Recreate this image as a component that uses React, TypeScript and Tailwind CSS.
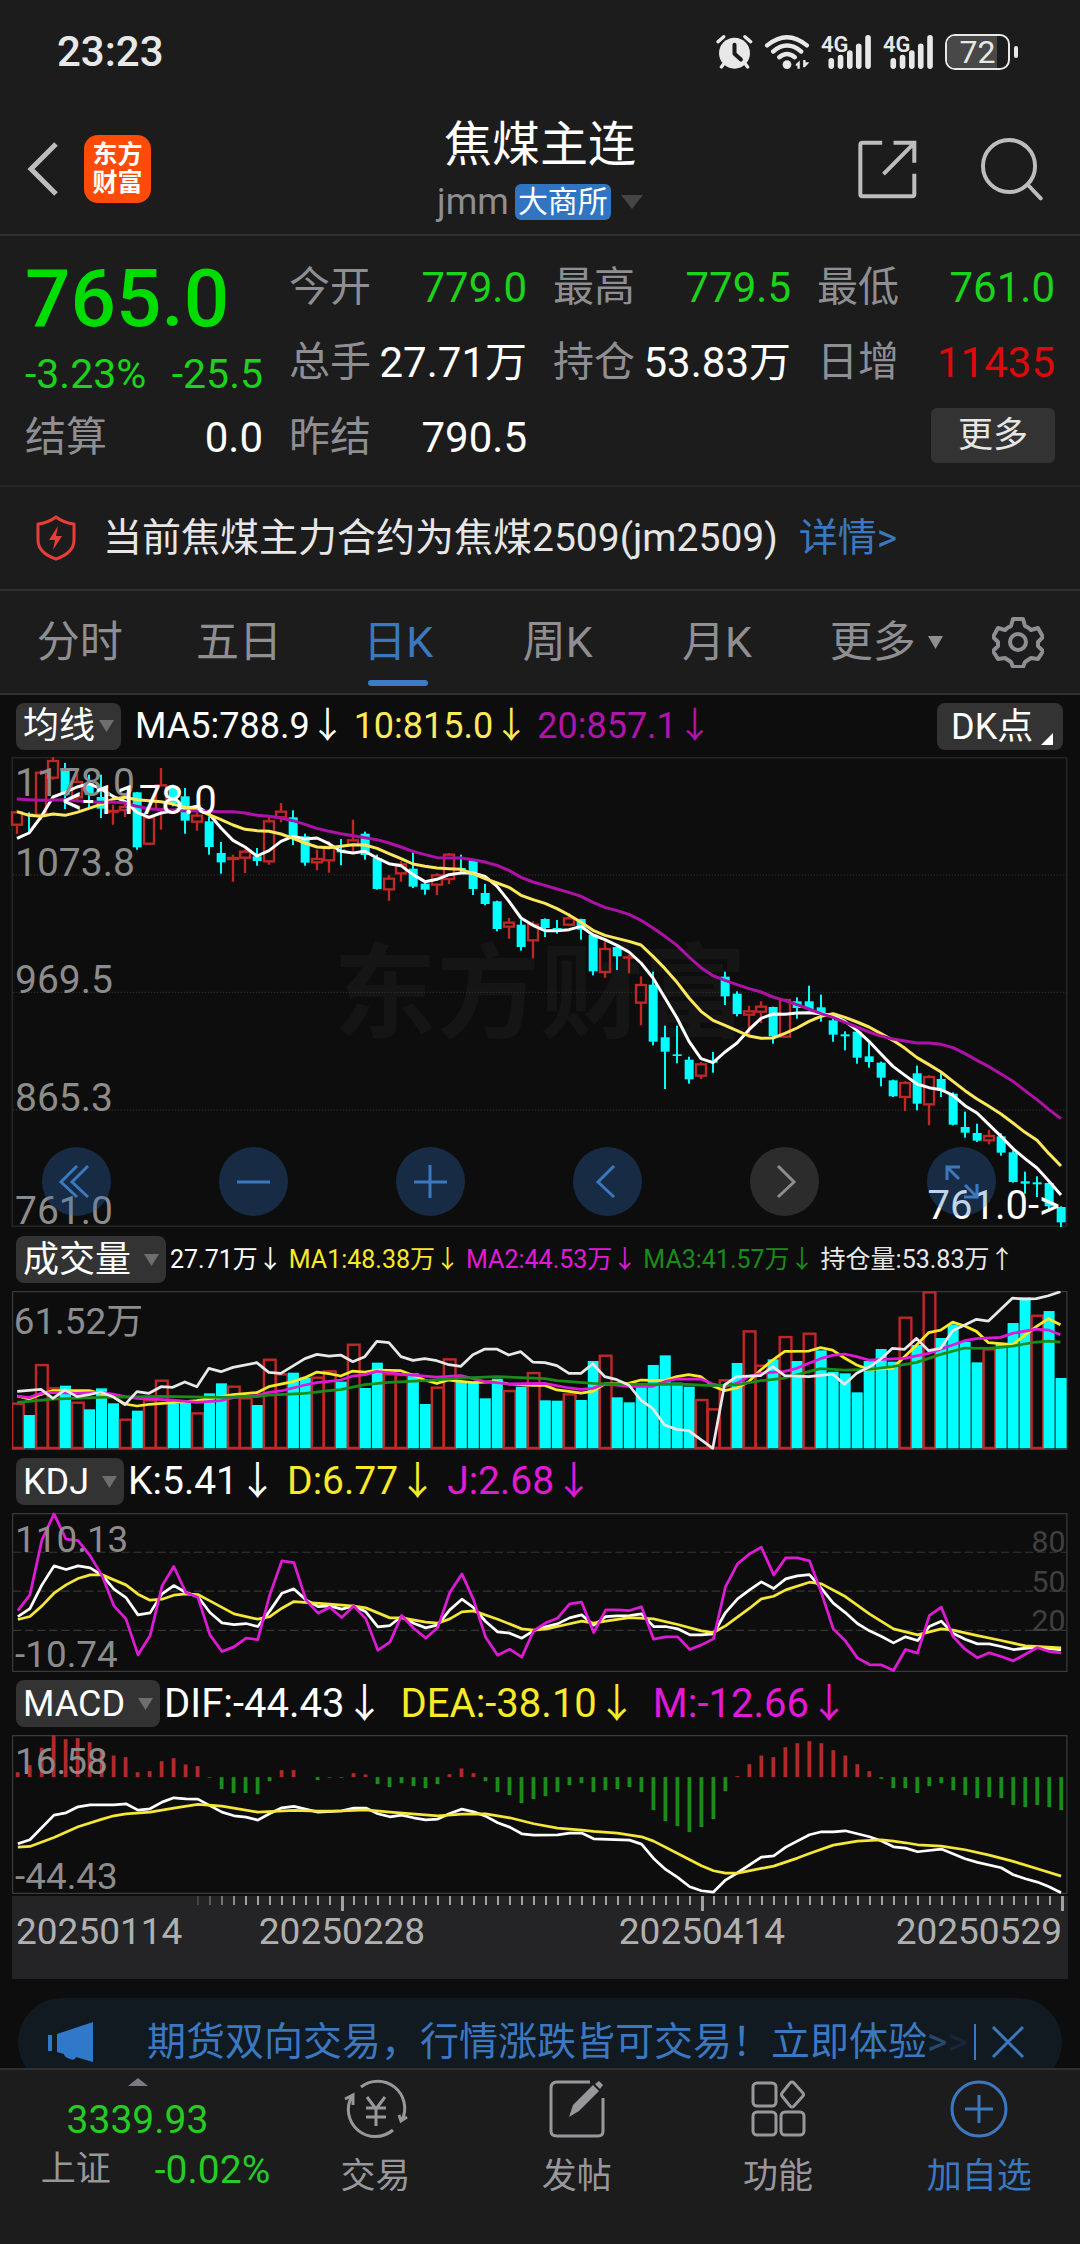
import React from "react";

/* ---------- Series data (chart units: main panel 36 per bar, sub panels 34.85 per bar) ---------- */

// [direction, high, bodyTop, bodyBottom, low]
type Candle = ["u" | "d", number, number, number, number];
const candles: Candle[] = [
  ["u", 212, 216, 257, 282], ["d", 218, 222, 226, 280], ["u", 92, 97, 227, 240], ["u", 53, 62, 116, 120],
  ["d", 70, 88, 165, 208], ["u", 100, 125, 175, 182], ["d", 105, 130, 165, 205], ["d", 105, 172, 207, 235],
  ["u", 195, 212, 218, 255], ["u", 190, 200, 213, 232], ["d", 157, 158, 323, 330], ["u", 228, 232, 314, 316],
  ["u", 85, 135, 210, 270], ["d", 135, 145, 190, 200], ["d", 145, 170, 243, 282], ["u", 218, 226, 248, 273],
  ["d", 230, 245, 322, 345], ["d", 307, 340, 368, 402], ["u", 345, 353, 360, 426], ["u", 330, 334, 356, 400],
  ["d", 325, 350, 364, 378], ["u", 230, 243, 367, 375], ["u", 190, 214, 235, 248], ["d", 212, 233, 292, 316],
  ["d", 282, 290, 369, 378], ["u", 330, 356, 370, 392], ["u", 305, 320, 364, 399], ["d", 298, 330, 338, 377],
  ["u", 240, 300, 318, 335], ["d", 276, 282, 346, 360], ["d", 345, 355, 448, 450], ["u", 406, 415, 451, 483],
  ["u", 365, 372, 403, 426], ["d", 338, 387, 441, 445], ["d", 428, 432, 450, 465], ["u", 400, 405, 437, 466],
  ["u", 340, 343, 420, 433], ["d", 345, 385, 391, 397], ["d", 360, 362, 448, 466], ["d", 433, 460, 493, 497],
  ["d", 483, 485, 568, 575], ["u", 535, 547, 563, 597], ["d", 540, 555, 622, 633], ["u", 545, 553, 604, 656],
  ["d", 536, 538, 565, 592], ["d", 541, 565, 570, 582], ["u", 520, 534, 557, 560], ["d", 537, 538, 570, 600],
  ["d", 584, 585, 695, 707], ["u", 605, 626, 699, 714], ["d", 615, 622, 650, 691], ["u", 645, 651, 656, 701],
  ["u", 710, 734, 791, 857], ["d", 696, 735, 906, 917], ["d", 858, 893, 936, 1048], ["d", 858, 944, 949, 971],
  ["d", 951, 960, 1019, 1032], ["u", 967, 972, 1010, 1018], ["d", 937, 963, 969, 999], ["d", 696, 711, 770, 796],
  ["d", 755, 762, 823, 830], ["u", 798, 813, 827, 890], ["u", 785, 799, 818, 850], ["d", 801, 802, 890, 912],
  ["u", 777, 779, 893, 895], ["d", 773, 785, 805, 837], ["d", 738, 785, 808, 812], ["d", 765, 803, 825, 846],
  ["d", 835, 842, 885, 906], ["d", 875, 884, 890, 932], ["d", 872, 876, 954, 972], ["d", 902, 950, 967, 984],
  ["d", 966, 969, 1014, 1040], ["d", 1020, 1022, 1070, 1072], ["u", 1025, 1028, 1074, 1114], ["d", 978, 1001, 1092, 1112],
  ["u", 1007, 1010, 1096, 1157], ["d", 997, 1018, 1052, 1072], ["d", 1058, 1062, 1155, 1157], ["d", 1116, 1162, 1179, 1194],
  ["d", 1152, 1180, 1203, 1207], ["u", 1170, 1187, 1204, 1214], ["d", 1181, 1190, 1239, 1248], ["d", 1232, 1238, 1327, 1329],
  ["d", 1296, 1325, 1332, 1362], ["d", 1310, 1328, 1334, 1372], ["d", 1325, 1330, 1400, 1415], ["d", 1400, 1402, 1448, 1462],
];

const ma5 = [
  296, 280, 232, 172, 158, 142, 132, 148, 170, 185, 218, 233, 220, 213, 207, 200, 222, 265, 302, 322, 349, 333, 305, 290,
  298, 295, 312, 335, 340, 335, 355, 372, 378, 405, 426, 419, 405, 400, 400, 410, 440, 485, 535, 557, 573, 573, 570, 560,
  586, 600, 617, 637, 670, 715, 775, 835, 905, 957, 969, 937, 910, 870, 836, 823, 824, 820, 819, 822, 828, 845, 872, 905,
  943, 980, 1007, 1033, 1044, 1050, 1067, 1098, 1120, 1155, 1190, 1227, 1257, 1285, 1325, 1366,
];
const ma10 = [
  216, 227, 230, 223, 227, 218, 206, 194, 178, 173, 180, 183, 186, 193, 203, 210, 225, 240, 256, 269, 273, 275, 283, 296,
  310, 322, 324, 320, 315, 316, 326, 342, 357, 373, 380, 385, 387, 389, 402, 417, 430, 443, 467, 480, 491, 507, 526, 548,
  572, 587, 596, 605, 616, 650, 687, 728, 775, 815, 842, 857, 873, 889, 896, 895, 881, 865, 845, 830, 822, 833, 847, 862,
  882, 902, 926, 954, 975, 997, 1025, 1053, 1078, 1100, 1123, 1150, 1178, 1202, 1242, 1279,
];
const ma20 = [
  178, 180, 182, 181, 180, 183, 186, 188, 187, 190, 200, 207, 210, 211, 214, 214, 215, 216, 216, 220, 227, 230, 235, 243,
  254, 266, 275, 282, 288, 294, 300, 310, 322, 335, 345, 354, 355, 355, 360, 367, 377, 392, 413, 427, 437, 448, 458, 470,
  488, 503, 513, 524, 542, 565, 590, 617, 652, 684, 708, 722, 735, 747, 757, 772, 783, 795, 808, 822, 833, 848, 862, 877,
  889, 898, 904, 910, 910, 914, 924, 942, 962, 981, 1003, 1025, 1053, 1080, 1110, 1137,
];

// Volume bar tops; a leading minus marks a falling (filled) day
const volume = [
  518, -555, 402, 472, -467, 515, -538, -475, -520, 566, -542, 508, 449, -520, -516, 547, -490, -460, 467, 502, -525, 386,
  430, -428, -443, 440, 421, -455, 341, -474, -398, 430, 432, -430, -522, 470, 385, -455, -455, -505, -446, 480, -470, 426,
  -511, -512, 490, -510, -393, 374, -502, -517, -468, -405, -376, -458, -470, 507, 535, 448, -399, 301, 404, -388, 318,
  -393, 308, -361, -425, -430, -487, -393, -357, -395, 260, -345, 184, -324, -283, -335, -397, 355, -340, -279, -202, 254,
  -243, -444,
];
const volMa1 =
  "50,498 85,507 119,493 154,482 259,482 293,490 328,500 363,522 398,528 433,523 502,518 572,512 642,500 677,494 746,488 781,470 851,455 886,443 921,426 956,431 990,438 1025,423 1060,426 1095,420 1165,422 1200,436 1234,450 1269,460 1304,450 1374,458 1443,455 1478,462 1548,466 1583,466 1618,480 1653,484 1688,489 1722,484 1757,462 1827,460 1862,450 1931,452 1966,440 2001,434 2036,440 2071,468 2105,482 2140,474 2175,455 2210,420 2245,390 2280,364 2350,363 2384,353 2419,360 2454,384 2489,405 2524,418 2593,415 2628,380 2663,345 2698,308 2733,300 2768,276 2803,288 2837,304 2872,338 2942,344 3011,290 3046,266 3081,284";
const volMa2 =
  "50,498 85,503 119,490 154,487 224,490 293,487 328,492 363,500 398,505 502,510 572,517 642,512 677,503 746,497 781,487 816,483 886,465 921,458 990,450 1025,438 1060,434 1095,424 1165,432 1269,441 1339,437 1409,455 1443,458 1478,462 1583,460 1653,474 1688,478 1722,475 1757,462 1827,469 1896,469 1931,455 1966,447 2036,447 2071,462 2105,470 2140,460 2175,440 2210,430 2280,424 2315,415 2350,400 2384,386 2419,376 2454,372 2489,380 2524,390 2628,385 2698,370 2768,345 2803,332 2837,326 2907,322 2942,310 3011,297 3046,300 3081,314";
const volMa3 =
  "50,517 154,507 293,502 468,499 642,502 746,500 781,495 886,490 956,482 990,479 1060,464 1130,457 1234,452 1339,444 1443,440 1583,446 1618,452 1722,460 1827,463 1966,462 2071,467 2140,465 2210,452 2280,444 2350,425 2384,416 2454,420 2524,418 2593,410 2663,397 2733,373 2803,354 2872,355 2942,348 3011,336 3046,333 3081,336";
const openInterest =
  "50,484 119,478 154,505 189,480 224,500 259,494 293,486 328,500 363,524 398,485 433,490 468,470 502,472 537,456 572,470 607,415 642,425 677,412 746,398 781,427 816,430 886,386 921,373 956,378 990,375 1025,395 1060,380 1095,334 1130,338 1165,380 1200,391 1234,386 1269,392 1304,404 1339,409 1374,374 1409,357 1443,357 1478,375 1513,365 1548,396 1583,398 1618,407 1653,430 1688,430 1722,401 1757,440 1792,449 1827,465 1862,510 1896,535 1931,585 1966,598 2001,602 2071,655 2105,465 2140,440 2210,437 2245,410 2280,437 2350,440 2419,432 2454,463 2489,430 2524,412 2558,388 2593,355 2628,358 2663,325 2698,362 2733,355 2768,302 2803,285 2837,268 2872,273 2942,204 2976,207 3011,206 3046,197 3081,185";

const kdjJ =
  "52,332 87,285 122,120 157,42 192,118 227,122 262,168 297,228 331,318 366,357 401,465 436,408 471,258 505,200 540,278 575,292 610,405 645,455 680,441 715,415 749,419 784,285 819,183 854,188 889,300 924,340 958,322 993,353 1028,318 1063,357 1098,451 1133,427 1167,347 1202,385 1237,415 1272,383 1307,278 1342,222 1376,300 1411,412 1446,466 1481,448 1516,472 1551,392 1588,368 1620,355 1655,312 1690,307 1725,398 1760,330 1794,330 1829,332 1864,321 1899,418 1934,411 1969,411 2004,449 2038,435 2073,417 2108,260 2143,192 2178,162 2212,142 2248,225 2283,174 2317,174 2352,183 2387,280 2421,387 2456,423 2491,474 2526,494 2560,495 2596,512 2631,449 2666,460 2700,347 2735,322 2769,410 2804,448 2840,474 2874,459 2909,470 2944,483 2979,463 3014,443 3048,455 3083,459";
const kdjK =
  "52,350 87,326 122,255 157,198 192,209 227,198 262,204 297,226 331,268 366,293 401,345 436,339 471,282 505,257 540,278 575,290 610,338 645,369 680,374 715,371 749,380 784,333 819,280 854,267 889,300 924,320 958,318 993,328 1028,318 1063,336 1098,381 1133,377 1167,350 1202,370 1237,384 1272,375 1307,330 1342,298 1376,323 1411,365 1446,396 1481,400 1516,415 1551,392 1588,380 1620,372 1655,354 1690,345 1725,376 1760,350 1794,348 1829,347 1864,342 1899,380 1934,380 1969,387 2004,405 2038,405 2073,402 2108,338 2143,297 2178,270 2212,246 2248,266 2283,237 2317,228 2352,224 2387,266 2421,310 2456,338 2491,371 2526,393 2560,409 2596,429 2631,411 2666,422 2700,380 2735,364 2769,400 2804,418 2840,432 2874,432 2909,440 2944,449 3014,442 3083,450";
const kdjD =
  "52,359 87,350 122,318 157,280 192,255 227,236 262,225 297,225 331,240 366,255 401,283 436,301 471,298 505,286 540,282 575,284 610,303 680,342 749,358 784,350 819,325 854,305 958,313 1028,319 1063,324 1133,354 1167,354 1237,367 1272,370 1307,357 1342,336 1376,333 1446,358 1516,387 1551,391 1588,387 1620,380 1690,364 1725,370 1760,364 1829,353 1899,357 1969,374 2038,393 2073,398 2108,378 2178,325 2212,297 2248,289 2283,270 2352,247 2387,252 2456,290 2526,342 2596,387 2666,405 2735,387 2769,391 2840,407 2909,422 2979,438 3083,444";

const macdBars = [
  816, 795, 743, 705, 717, 714, 726, 750, 766, 771, 816, 813, 783, 774, 793, 798, 833, 867, 879, 879, 882, 843, 810, 810,
  831, 840, 833, 833, 819, 823, 852, 861, 849, 858, 864, 852, 822, 805, 819, 843, 876, 885, 909, 897, 888, 876, 855, 849,
  876, 870, 867, 861, 876, 930, 963, 978, 996, 981, 957, 873, 828, 792, 766, 771, 741, 729, 723, 729, 750, 766, 792, 813,
  836, 864, 864, 879, 858, 849, 870, 885, 894, 891, 894, 915, 921, 915, 921, 930,
];
const dif =
  "52,1031 87,1019 157,945 192,938 227,920 262,914 331,914 366,911 401,930 436,926 471,906 505,893 540,896 575,897 645,936 680,947 715,951 749,960 784,940 819,923 854,919 924,936 993,932 1028,924 1063,924 1098,941 1133,950 1167,945 1202,953 1237,959 1272,957 1307,940 1342,927 1376,935 1411,948 1446,968 1481,981 1516,1001 1551,1005 1620,1004 1655,999 1690,999 1725,1016 1829,1020 1864,1032 1899,1075 1934,1108 1969,1132 2004,1160 2038,1172 2073,1176 2108,1140 2143,1118 2212,1071 2248,1067 2283,1041 2352,1004 2387,995 2421,995 2456,992 2526,1010 2560,1022 2596,1040 2631,1044 2666,1055 2735,1047 2804,1076 2840,1087 2909,1103 2944,1124 2979,1136 3014,1146 3048,1160 3083,1178";
const dea =
  "52,1041 87,1039 157,1012 227,980 297,957 331,947 366,941 436,936 505,924 575,913 645,918 749,936 854,931 924,933 993,932 1063,929 1133,936 1272,947 1342,942 1411,941 1481,953 1551,971 1620,984 1690,990 1725,994 1794,999 1864,1010 1899,1023 1969,1060 2038,1097 2073,1112 2108,1119 2143,1119 2212,1105 2248,1098 2317,1074 2352,1060 2421,1035 2491,1023 2560,1019 2596,1023 2631,1028 2666,1034 2735,1038 2804,1049 2874,1065 2944,1084 3014,1106 3083,1128";

const mainLine = (values: number[]) => values.map((v, i) => `${51 + 36 * i},${v}`).join(" ");
const subX = (i: number) => 50 + 34.85 * i;

// Sub panel series are recorded at 3 units per pixel; their drawing space uses 2.904
const subY = (v: number) => v * 0.968;
const subLine = (points: string) =>
  points
    .split(" ")
    .map((p) => p.split(",").map(Number))
    .map(([x, y]) => `${x},${subY(y).toFixed(1)}`)
    .join(" ");

const RED = "#c02727";
const CYAN = "#00ffff";
const GREEN = "#1a8c1a";

/* ---------- Status bar ---------- */

function SignalBars() {
  return (
    <svg viewBox="362 38 154 107" className="h-9 w-[51px] overflow-visible" aria-hidden="true">
      <g stroke="#e8e8e8" strokeWidth="17" strokeLinecap="round">
        <path d="M393 118v16M421 108v26M449 95v39M476 74v60M504 49v85" />
      </g>
      <text x="362" y="91" fontSize="66" fontWeight="600" fill="#e8e8e8">4G</text>
    </svg>
  );
}

function StatusBar() {
  return (
    <div className="flex h-[104px] items-center justify-between pr-[62px] pl-[57px] text-[#e8e8e8]">
      <span className="text-[42px] leading-none font-medium">23:23</span>
      <div className="flex items-center gap-[11px]">
        <svg viewBox="50 38 110 107" className="h-9 w-[37px]" aria-label="闹钟">
          <circle cx="105" cy="95" r="46" fill="#e8e8e8" />
          <path d="M56 61l17-15M153 61l-17-15M72 128l-6 8M138 128l6 8" stroke="#e8e8e8" strokeWidth="10" strokeLinecap="round" />
          <path d="M105 70v27l19 17" fill="none" stroke="#1c1c1c" strokeWidth="12" strokeLinecap="round" strokeLinejoin="round" />
        </svg>
        <svg viewBox="193 38 136 107" className="h-9 w-[46px]" aria-label="无线网络">
          <g fill="none" stroke="#e8e8e8" strokeWidth="13" strokeLinecap="round">
            <path d="M202 72Q261 23 320 72M220 90Q261 55 303 90M238 107Q261 88 284 107" />
          </g>
          <circle cx="261" cy="129" r="13" fill="#e8e8e8" />
          <path d="M287 128l12-11v24h-7v-9h-5zM326 124l-12 13h-5v-22h7v7h10z" fill="#e8e8e8" />
        </svg>
        <SignalBars />
        <SignalBars />
        <div className="flex items-center gap-1">
          <div className="relative flex h-9 w-[65px] items-center justify-center overflow-hidden rounded-[10px] border-2 border-[#e8e8e8]">
            <div className="absolute inset-y-0 left-0 w-[50px] bg-[#484848]" />
            <span className="relative text-[32px] leading-none">72</span>
          </div>
          <div className="h-3 w-1 rounded-full bg-[#e8e8e8]" />
        </div>
      </div>
    </div>
  );
}

/* ---------- Title bar ---------- */

function TitleBar() {
  return (
    <header className="flex h-[132px] items-center justify-between border-b-2 border-[#303030] pr-9 pl-[27px]">
      <div className="flex w-[195px] items-center gap-[25px]">
        <button type="button" aria-label="返回">
          <svg viewBox="0 0 32 56" className="h-14 w-8" fill="none" stroke="#bdbdbd" strokeWidth="5">
            <path d="M29 3L4 28l25 25" />
          </svg>
        </button>
        <div className="flex h-[68px] w-[67px] flex-col items-center justify-center rounded-[14px] bg-[#ff4b08] text-[25px] leading-[28px] font-bold text-white">
          <span>东方</span>
          <span>财富</span>
        </div>
      </div>
      <div className="flex flex-col items-center gap-3">
        <h1 className="text-[48px] leading-[54px] text-white">焦煤主连</h1>
        <button type="button" className="flex h-9 items-center text-[#8e8e93]">
          <span className="text-[36px] leading-9">jmm</span>
          <span className="ml-[6px] flex h-9 items-center rounded-md bg-[#3074c2] px-[3px] text-[30px] leading-none text-white">大商所</span>
          <svg viewBox="0 0 22 14" className="ml-[10px] h-[14px] w-[22px]" fill="#454545"><path d="M0 0h22L11 14z" /></svg>
        </button>
      </div>
      <div className="flex w-[186px] items-center justify-between">
        <button type="button" aria-label="分享">
          <svg viewBox="472 357 176 176" className="h-[59px] w-[59px]" fill="none" stroke="#bdbdbd" strokeWidth="12">
            <path d="M544 365h-58q-7 0-7 7v146q0 7 7 7h147q7 0 7-7v-60M578 365h62v60M638 368l-90 91" />
          </svg>
        </button>
        <button type="button" aria-label="搜索">
          <svg viewBox="840 348 194 194" className="h-16 w-16" fill="none" stroke="#bdbdbd" strokeWidth="12">
            <circle cx="928" cy="436" r="79" />
            <path d="M984 492l40 42" strokeLinecap="round" />
          </svg>
        </button>
      </div>
    </header>
  );
}

/* ---------- Quote ---------- */

function Field({ label, value, tone = "text-white" }: { label: string; value: string; tone?: string }) {
  return (
    <div className="flex h-[75px] items-center justify-between">
      <span className="text-[41px] leading-none text-[#8e8e93]">{label}</span>
      <span className={`text-[42px] leading-none ${tone}`}>{value}</span>
    </div>
  );
}

function Quote() {
  const green = "text-[#1bd31b]";
  return (
    <section className="grid grid-cols-4 gap-x-[26px] border-b-2 border-[#262626] px-[25px] pt-[14px] pb-[10px]">
      <div>
        <div className="flex h-[98px] items-center text-[80px] leading-none font-medium text-[#00db00]">765.0</div>
        <div className={`flex h-[52px] items-center justify-between text-[41px] leading-none ${green}`}>
          <span>-3.23%</span>
          <span>-25.5</span>
        </div>
        <Field label="结算" value="0.0" />
      </div>
      <div>
        <Field label="今开" value="779.0" tone={green} />
        <Field label="总手" value="27.71万" />
        <Field label="昨结" value="790.5" />
      </div>
      <div>
        <Field label="最高" value="779.5" tone={green} />
        <Field label="持仓" value="53.83万" />
      </div>
      <div>
        <Field label="最低" value="761.0" tone={green} />
        <Field label="日增" value="11435" tone="text-[#dc0a0a]" />
        <div className="flex h-[71px] items-center justify-end">
          <button type="button" className="h-[55px] w-[124px] rounded-md bg-[#333333] text-[35px] leading-none text-[#e6e6e6]">更多</button>
        </div>
      </div>
    </section>
  );
}

function Notice() {
  return (
    <section className="flex h-[104px] items-center border-b-2 border-[#303030] pl-[35px]">
      <svg viewBox="0 0 42 46" className="h-[46px] w-[42px]" aria-hidden="true">
        <path d="M21 2Q29 8 39 9v16q0 13-18 19Q3 38 3 25V9Q13 8 21 2z" fill="none" stroke="#ea3d38" strokeWidth="3" strokeLinejoin="round" />
        <path d="M23 11L14 25h6l-2 10 9-14h-6z" fill="#ea3d38" />
      </svg>
      <p className="ml-[26px] text-[39px] leading-none text-[#e6e6e6]">当前焦煤主力合约为焦煤2509(jm2509)</p>
      <a href="#detail" className="ml-[21px] text-[39px] leading-none text-[#3b78c0]">详情&gt;</a>
    </section>
  );
}

function Tabs() {
  const tabs = ["分时", "五日", "日K", "周K", "月K"];
  return (
    <nav className="flex h-[104px] items-stretch border-b-2 border-[#303030] text-[43px] leading-none text-[#8e8e93]">
      <div className="grid flex-1 grid-cols-6">
        {tabs.map((t) => (
          <button key={t} type="button" className={t === "日K" ? "relative text-[#3b78c0]" : "relative"}>
            {t}
            {t === "日K" && <span className="absolute bottom-[7px] left-1/2 h-[6px] w-[60px] -translate-x-1/2 rounded-full bg-[#3b7bc8]" />}
          </button>
        ))}
        <button type="button" className="flex items-center justify-center gap-3 pl-5">
          更多
          <svg viewBox="0 0 30 26" className="h-[13px] w-[15px]" fill="#8e8e93"><path d="M0 0h30L15 26z" /></svg>
        </button>
      </div>
      <button type="button" aria-label="设置" className="flex w-[124px] items-center justify-center">
        <svg viewBox="0 0 52 52" className="h-[52px] w-[52px]" fill="none" stroke="#8e8e93" strokeWidth="4" strokeLinejoin="round">
          <path d="M21 3h10l2 7q3 1 6 4l7-2 5 9-5 5v4l5 5-5 8-7-1-6 4-2 5H21l-2-5-6-4-7 1-5-8 5-5v-4l-5-5 5-9 7 2q3-3 6-4z" />
          <circle cx="26" cy="26" r="8" />
        </svg>
      </button>
    </nav>
  );
}

/* ---------- Indicator headers ---------- */

function Picker({ label, tight = false }: { label: string; tight?: boolean }) {
  return (
    <button
      type="button"
      className={`flex h-[47px] shrink-0 items-center rounded-lg bg-[#333333] px-[7px] text-[36px] leading-none text-white ${tight ? "gap-1" : "gap-[13px]"}`}
    >
      {label}
      <svg viewBox="0 0 30 24" className="h-3 w-[15px]" fill="#6e6e6e"><path d="M0 0h30L15 24z" /></svg>
    </button>
  );
}

type Reading = { text: string; tone: string };

function Readings({ items, className }: { items: Reading[]; className: string }) {
  return (
    <div className={`flex items-center leading-none whitespace-nowrap ${className}`}>
      {items.map((r) => (
        <span key={r.text} className={r.tone}>{r.text}</span>
      ))}
    </div>
  );
}

/* ---------- Charts ---------- */

function MainChart() {
  return (
    <svg viewBox="36 52 3168 1413" className="block w-full overflow-visible" role="img" aria-label="日K线图">
      <text x="1000" y="870" fontSize="310" fontWeight="700" fill="#151515">东方财富</text>
      <rect x="37" y="54" width="3163" height="1406" fill="none" stroke="#242424" strokeWidth="5" />
      {[406, 758, 1111].map((y) => (
        <line key={y} x1="38" x2="3200" y1={y} y2={y} stroke="#333333" strokeWidth="3" strokeDasharray="4 5" />
      ))}
      {candles.map(([dir, high, top, bottom, low], i) => {
        const x = 51 + 36 * i;
        return dir === "d" ? (
          <g key={i} fill={CYAN}>
            <rect x={x - 3} y={high} width="6" height={low - high} />
            <rect x={x - 13} y={top} width="27" height={bottom - top} />
          </g>
        ) : (
          <g key={i} stroke={RED} strokeWidth="7" fill="none">
            <path d={`M${x} ${high}V${top}M${x} ${bottom}V${low}`} />
            <rect x={x - 15} y={top + 2} width="30" height={bottom - top - 4} />
          </g>
        );
      })}
      <g fill="none" strokeWidth="9" strokeLinejoin="round">
        <polyline points={mainLine(ma5)} stroke="#ffffff" />
        <polyline points={mainLine(ma10)} stroke="#fde85c" />
        <polyline points={mainLine(ma20)} stroke="#ad12a7" />
      </g>
      <g fill="#8c8c8c" fontSize="117">
        <text x="45" y="168">1178.0</text>
        <text x="45" y="408">1073.8</text>
        <text x="45" y="760">969.5</text>
        <text x="45" y="1113">865.3</text>
        <text x="45" y="1452">761.0</text>
      </g>
      <g fill="#ffffff" fontSize="120">
        <text x="650" y="222" textAnchor="end">&lt;-1178.0</text>
        <text x="3180" y="1437" textAnchor="end">761.0-&gt;</text>
      </g>
    </svg>
  );
}

const controls: { label: string; path: string; muted?: boolean }[] = [
  { label: "最早", path: "M35 19L19 35l16 15M46 19L30 35l16 15" },
  { label: "缩小", path: "M18 35h33" },
  { label: "放大", path: "M18 35h33M34 18v33" },
  { label: "向左", path: "M41 19L25 35l16 15" },
  { label: "向右", path: "M28 19l16 16-16 15", muted: true },
  { label: "全屏", path: "M20 33V20h13M20 20l12 12M50 37v13H37M50 50L38 38" },
];

function ChartControls() {
  return (
    <div className="absolute inset-x-0 bottom-3 flex justify-between pr-[72px] pl-[30px]">
      {controls.map((c) => (
        <button
          key={c.label}
          type="button"
          aria-label={c.label}
          className={`h-[69px] w-[69px] rounded-full ${c.muted ? "bg-[#4b4b4b]/50" : "bg-[#3074c2]/30"}`}
        >
          <svg viewBox="0 0 69 69" className="h-full w-full" fill="none" stroke={c.muted ? "#8e8e8e" : "#3b78c0"} strokeWidth="3">
            <path d={c.path} />
          </svg>
        </button>
      ))}
    </div>
  );
}

function VolumeChart() {
  return (
    <svg viewBox="35 177 3068 462" className="block w-full" role="img" aria-label="成交量">
      <rect x="37" y="179" width="3063" height="458" fill="none" stroke="#444444" strokeWidth="3" />
      {volume.map((v, i) =>
        v < 0 ? (
          <rect key={i} x={subX(i) - 15} y={subY(-v)} width="32" height={634 - subY(-v)} fill={CYAN} />
        ) : (
          <rect key={i} x={subX(i) - 15} y={subY(v) + 3} width="34" height={630 - subY(v)} fill="none" stroke={RED} strokeWidth="7" />
        ),
      )}
      <g fill="none" strokeWidth="8" strokeLinejoin="round">
        <polyline points={subLine(volMa1)} stroke="#f8ea28" />
        <polyline points={subLine(volMa2)} stroke="#e11ad8" />
        <polyline points={subLine(volMa3)} stroke={GREEN} />
        <polyline points={subLine(openInterest)} stroke="#e8e8e8" />
      </g>
      <text x="40" y="302" fontSize="107" fill="#8c8c8c">61.52万</text>
    </svg>
  );
}

function KdjChart() {
  return (
    <svg viewBox="35 38 3068 462" className="block w-full overflow-visible" role="img" aria-label="KDJ">
      <rect x="37" y="40" width="3063" height="458" fill="none" stroke="#444444" strokeWidth="3" />
      {[152, 265, 379].map((y) => (
        <line key={y} x1="38" x2="3098" y1={y} y2={y} stroke="#363636" strokeWidth="3" strokeDasharray="24 11" />
      ))}
      <g fill="#404040" fontSize="88" textAnchor="end">
        <text x="3096" y="150">80</text>
        <text x="3096" y="267">50</text>
        <text x="3096" y="381">20</text>
      </g>
      <g fill="none" strokeWidth="8" strokeLinejoin="round">
        <polyline points={subLine(kdjK)} stroke="#ffffff" />
        <polyline points={subLine(kdjD)} stroke="#f5e63a" />
        <polyline points={subLine(kdjJ)} stroke="#de1bd4" />
      </g>
      <g fill="#8c8c8c" fontSize="107">
        <text x="44" y="152">110.13</text>
        <text x="44" y="485">-10.74</text>
      </g>
    </svg>
  );
}

function MacdChart() {
  const zero = subY(831);
  return (
    <svg viewBox="35 682 3068 462" className="block w-full overflow-visible" role="img" aria-label="MACD">
      <rect x="37" y="684" width="3063" height="458" fill="none" stroke="#444444" strokeWidth="3" />
      {macdBars.map((v, i) => (
        <rect
          key={i}
          x={subX(i) - 4}
          y={Math.min(subY(v), zero)}
          width="11"
          height={Math.abs(subY(v) - zero)}
          fill={v < 831 ? "#b02a2a" : GREEN}
        />
      ))}
      <g fill="none" strokeWidth="8" strokeLinejoin="round">
        <polyline points={subLine(dif)} stroke="#ffffff" />
        <polyline points={subLine(dea)} stroke="#f5e63a" />
      </g>
      <g fill="#8c8c8c" fontSize="107">
        <text x="44" y="796">16.58</text>
        <text x="44" y="1130">-44.43</text>
      </g>
    </svg>
  );
}

function Timeline() {
  const major = [27, 57, 87];
  return (
    <svg viewBox="12 0 1056 83" className="mt-[2px] block w-full bg-[#242426]" role="img" aria-label="时间轴">
      {Array.from({ length: 73 }, (_, k) => k + 15).map((i) => {
        const isMajor = major.includes(i);
        return (
          <rect
            key={i}
            x={17 + 12 * i}
            y="0"
            width={isMajor ? 3 : 2}
            height={isMajor ? 15 : 9}
            fill="#a0a0a0"
            opacity={i < 19 ? 0.25 + (i - 15) * 0.2 : 1}
          />
        );
      })}
      <g fill="#b0b0b0" fontSize="37">
        <text x="16" y="48">20250114</text>
        <text x="342" y="48" textAnchor="middle">20250228</text>
        <text x="702" y="48" textAnchor="middle">20250414</text>
        <text x="1062" y="48" textAnchor="end">20250529</text>
      </g>
    </svg>
  );
}

/* ---------- Bottom ---------- */

function Banner() {
  return (
    <aside className="mx-[18px] mt-[19px] flex h-[88px] shrink-0 items-center rounded-full bg-[#111921] pr-[37px] pl-[29px] text-[#3b78c0]">
      <svg viewBox="0 0 46 40" className="h-10 w-[46px]" fill="#3078c8" aria-hidden="true">
        <path d="M1 13h4v16H1zM10 12L46 0v40L29 35q-1 4-6 2-6-2-6-5l-7-2z" />
      </svg>
      <a href="#trade" className="ml-[54px] flex-1 text-[39px] leading-[56px] whitespace-nowrap">
        期货双向交易，行情涨跌皆可交易！立即体验<span className="opacity-50">&gt;</span><span className="opacity-15">&gt;</span>
      </a>
      <div className="h-9 w-[2px] bg-[#3b78c0]" />
      <button type="button" aria-label="关闭" className="ml-[15px]">
        <svg viewBox="0 0 34 34" className="h-[34px] w-[34px]" fill="none" stroke="#3b78c0" strokeWidth="3">
          <path d="M2 2l30 30M32 2L2 32" />
        </svg>
      </button>
    </aside>
  );
}

function NavItem({ label, tone, children }: { label: string; tone: string; children: React.ReactNode }) {
  return (
    <button type="button" className={`flex flex-1 flex-col items-center gap-[19px] pt-[9px] ${tone}`}>
      <svg viewBox="0 0 64 60" className="h-[60px] w-16" fill="none" stroke="currentColor" strokeWidth="3">
        {children}
      </svg>
      <span className="text-[35px] leading-[38px]">{label}</span>
    </button>
  );
}

function BottomNav() {
  const grey = "text-[#98989c]";
  return (
    <nav className="flex h-[176px] shrink-0 border-t-2 border-[#303030] bg-[#1c1c1c]">
      <button type="button" className="flex w-[275px] flex-col items-center pt-2 text-[#24cc24]">
        <svg viewBox="0 0 20 8" className="h-2 w-5" fill="#7c7c80"><path d="M0 8L10 0l10 8z" /></svg>
        <span className="mt-3 text-[39px] leading-[44px]">3339.93</span>
        <span className="mt-1 flex items-center gap-11 pl-9 leading-[48px]">
          <span className={`text-[35px] ${grey}`}>上证</span>
          <span className="text-[39px]">-0.02%</span>
        </span>
      </button>
      <NavItem label="交易" tone={grey}>
        <path d="M17 8A27 27 0 0 1 58 41M49 51A27 27 0 0 1 8 17M1 20l8-4v10M63 38l-6 4-2-6" />
        <path d="M23 18l9 12 9-12M22 29h20M22 38h20M32 29v18" />
      </NavItem>
      <NavItem label="发帖" tone={grey}>
        <path d="M45 3H12q-6 0-6 6v43q0 5 6 5h41q5 0 5-5V19" />
        <path d="M24 38l4-12L48 6l6 6-20 20zM50 5l4-3 4 4-3 4z" fill="currentColor" stroke="none" />
      </NavItem>
      <NavItem label="功能" tone={grey}>
        <rect x="7" y="4" width="23" height="23" rx="4" />
        <rect x="7" y="33" width="23" height="23" rx="4" />
        <rect x="35" y="33" width="23" height="23" rx="4" />
        <path d="M46 3q1 0 2 1l9 10q1 2 0 3l-9 10q-2 2-4 0l-8-10q-1-1 0-3l8-10q1-1 2-1z" />
      </NavItem>
      <NavItem label="加自选" tone="text-[#3b78c0]">
        <circle cx="32" cy="30" r="27" />
        <path d="M18 30h28M32 16v28" />
      </NavItem>
    </nav>
  );
}

/* ---------- Page ---------- */

export default function App() {
  return (
    <div className="flex h-screen flex-col overflow-hidden bg-[#0d0d0d] font-['Roboto','Noto_Sans_CJK_SC',sans-serif]">
      <div className="shrink-0 bg-[#1c1c1c]">
        <StatusBar />
        <TitleBar />
        <Quote />
        <Notice />
        <Tabs />
      </div>
      <main className="flex min-h-0 flex-1 flex-col overflow-hidden">
        <div className="shrink-0 px-3">
          <div className="flex h-[62px] items-center pr-[5px] pl-1">
            <Picker label="均线" tight />
            <Readings
              className="ml-[14px] flex-1 gap-2 text-[36px]"
              items={[
                { text: "MA5:788.9↓", tone: "text-white" },
                { text: "10:815.0↓", tone: "text-[#fdea5c]" },
                { text: "20:857.1↓", tone: "text-[#b114ab]" },
              ]}
            />
            <button type="button" className="flex h-[47px] w-[126px] items-end gap-2 rounded-lg bg-[#333333] pb-[5px] pl-[14px] text-[36px] leading-9 text-white">
              DK点
              <svg viewBox="0 0 12 12" className="h-3 w-3" fill="#ffffff"><path d="M12 0v12H0z" /></svg>
            </button>
          </div>
          <div className="relative">
            <MainChart />
            <ChartControls />
          </div>
          <div className="flex h-[63px] items-center pl-1">
            <Picker label="成交量" />
            <Readings
              className="ml-1 gap-[6px] text-[25px]"
              items={[
                { text: "27.71万↓", tone: "text-white" },
                { text: "MA1:48.38万↓", tone: "text-[#f8ea28]" },
                { text: "MA2:44.53万↓", tone: "text-[#e11ad8]" },
                { text: "MA3:41.57万↓", tone: "text-[#1a8c1a]" },
                { text: "持仓量:53.83万↑", tone: "text-[#e8e8e8]" },
              ]}
            />
          </div>
          <VolumeChart />
          <div className="flex h-[63px] items-center pl-1">
            <Picker label="KDJ" />
            <Readings
              className="ml-1 gap-[10px] text-[39px]"
              items={[
                { text: "K:5.41↓", tone: "text-white" },
                { text: "D:6.77↓", tone: "text-[#f8ea28]" },
                { text: "J:2.68↓", tone: "text-[#e11ad8]" },
              ]}
            />
          </div>
          <KdjChart />
          <div className="flex h-[63px] items-center pl-1">
            <Picker label="MACD" />
            <Readings
              className="ml-1 gap-4 text-[40px]"
              items={[
                { text: "DIF:-44.43↓", tone: "text-white" },
                { text: "DEA:-38.10↓", tone: "text-[#f8ea28]" },
                { text: "M:-12.66↓", tone: "text-[#e11ad8]" },
              ]}
            />
          </div>
          <MacdChart />
          <Timeline />
        </div>
        <Banner />
      </main>
      <BottomNav />
    </div>
  );
}
